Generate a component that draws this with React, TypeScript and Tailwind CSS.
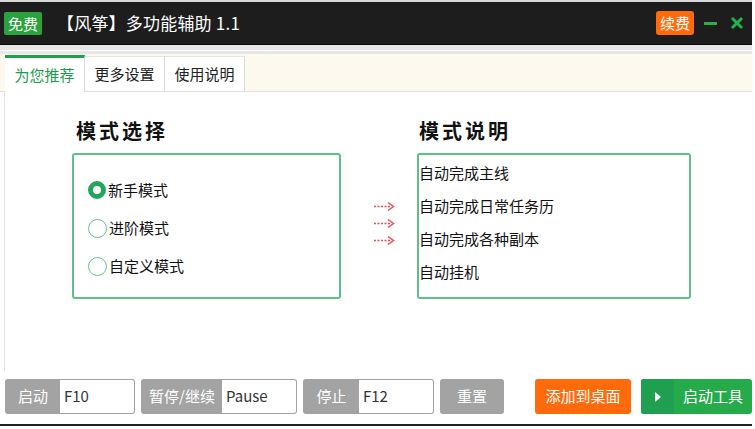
import React, { useState } from "react";

const font = { fontFamily: '"Microsoft YaHei", "Noto Sans CJK SC", "Noto Sans", sans-serif' };

const modes = ["新手模式", "进阶模式", "自定义模式"];
const descs = ["自动完成主线", "自动完成日常任务历", "自动完成各种副本", "自动挂机"];

const Radio: React.FC<{ checked: boolean }> = ({ checked }) =>
  checked ? (
    <span className="w-[18px] h-[18px] rounded-full border-[5px] border-[#24a65a] bg-white box-border" />
  ) : (
    <span className="w-[19px] h-[19px] rounded-full border-[1.5px] border-[#6cc08e] bg-white box-border" />
  );

const Arrow: React.FC = () => (
  <svg width="22" height="11" viewBox="0 0 22 11">
    <line x1="1" y1="5.5" x2="17" y2="5.5" stroke="#ea4b55" strokeWidth="1.4" strokeDasharray="2 1.5" />
    <path d="M15 1.5 L20.5 5.5 L15 9.5" fill="none" stroke="#ea4b55" strokeWidth="1.5" />
  </svg>
);

const HotkeyField: React.FC<{ label: string; value: string; labelW: string; inputW: string }> = ({
  label,
  value,
  labelW,
  inputW,
}) => (
  <div className="flex h-[35px] rounded-[3px] bg-[#a3a3a3] p-[1px]">
    <div className={`${labelW} flex items-center justify-center text-white text-[15px]`}>{label}</div>
    <div className={`${inputW} bg-white flex items-center pl-[4px] text-[15px] text-[#333] rounded-r-[2px]`}>{value}</div>
  </div>
);

export default function App() {
  const [mode, setMode] = useState(0);
  const [tab, setTab] = useState(0);
  const tabs = ["为您推荐", "更多设置", "使用说明"];

  return (
    <div className="w-[755px] h-[429px] bg-white overflow-hidden" style={font}>
      <div className="w-[752px] h-[429px] flex flex-col">
        {/* Title bar */}
        <div className="h-[45px] border-t-2 border-[#d8d8d8] bg-[#1d1d1d] flex items-center pl-[4px] pr-[8px] border-b border-b-[#0a0a0a]">
          <span className="bg-[#2ba23d] text-white text-[15px] leading-[23px] px-[4px] rounded-[2px]">免费</span>
          <span className="ml-[15px] text-white text-[17px] tracking-[0.2px]">【风筝】多功能辅助 1.1</span>
          <div className="ml-auto flex items-center">
            <span className="bg-[#ff6a0a] text-white text-[15px] leading-[24px] px-[4px] rounded-[3px]">续费</span>
            <span className="ml-[10px] w-[13px] h-[3px] bg-[#26b04a]" />
            <svg className="ml-[13px]" width="14" height="14" viewBox="0 0 14 14">
              <path d="M2 2 L12 12 M12 2 L2 12" stroke="#26b04a" strokeWidth="3" />
            </svg>
          </div>
        </div>

        {/* gray band */}
        <div className="h-[5px] bg-[#e6e6e6]" />
        <div className="h-[1px] bg-white" />
        <div className="h-[3px] bg-[#e8e8e8]" />

        {/* Tabs */}
        <div className="h-[38px] bg-[#fdf9ee] border-b border-[#e0e0e0] flex items-end pl-[5px] relative">
          {tabs.map((t, i) =>
            i === tab ? (
              <button
                key={t}
                onClick={() => setTab(i)}
                className="w-[80px] h-[37px] bg-white border-t-[3px] border-[#1fa04b] border-r border-r-[#dcdcdc] text-[15px] text-[#1f9a4a] -mb-[1px]"
              >
                {t}
              </button>
            ) : (
              <button
                key={t}
                onClick={() => setTab(i)}
                className="w-[80px] h-[35px] bg-white border-r border-[#dcdcdc] border-t border-t-[#e4e4e4] text-[15px] text-[#222]"
              >
                {t}
              </button>
            )
          )}
        </div>

        {/* Content */}
        <div className="flex-1 border-l border-[#e6e6e6] ml-[4px] flex pt-[26px]">
          <div className="ml-[67px] w-[269px]">
            <h2 className="text-[20px] font-bold text-[#111] tracking-[3px] leading-[26px] ml-[4px]">模式选择</h2>
            <div className="mt-[9px] h-[146px] border-2 border-[#5ec088] rounded-[3px] pt-[25px] pl-[14px] flex flex-col gap-[18px]">
              {modes.map((m, i) => (
                <label key={m} className="flex items-center cursor-pointer h-[20px]" onClick={() => setMode(i)}>
                  <Radio checked={mode === i} />
                  <span className="ml-[2px] text-[15px] text-[#111]">{m}</span>
                </label>
              ))}
            </div>
          </div>

          <div className="ml-[32px] mt-[83px] flex flex-col gap-[6px]">
            <Arrow />
            <Arrow />
            <Arrow />
          </div>

          <div className="ml-[22px] w-[274px]">
            <h2 className="text-[20px] font-bold text-[#111] tracking-[3px] leading-[26px] ml-[2px]">模式说明</h2>
            <div className="mt-[9px] h-[146px] border-2 border-[#5ec088] rounded-[3px] pt-[8px] flex flex-col gap-[13px]">
              {descs.map((d) => (
                <div key={d} className="text-[15px] text-[#111] leading-[20px]">
                  {d}
                </div>
              ))}
            </div>
          </div>
        </div>

        {/* Bottom bar */}
        <div className="h-[55px] flex items-start pt-[8px] pl-[5px] gap-[6px] border-b-2 border-[#222] mb-[3px]">
          <HotkeyField label="启动" value="F10" labelW="w-[54px]" inputW="w-[74px]" />
          <HotkeyField label="暂停/继续" value="Pause" labelW="w-[80px]" inputW="w-[74px]" />
          <HotkeyField label="停止" value="F12" labelW="w-[55px]" inputW="w-[74px]" />
          <button className="w-[64px] h-[35px] rounded-[3px] bg-[#a3a3a3] text-white text-[15px]">重置</button>
          <button className="ml-[25px] w-[96px] h-[35px] rounded-[3px] bg-[#ff6a0a] text-white text-[15px]">添加到桌面</button>
          <button className="ml-[4px] w-[111px] h-[35px] rounded-[3px] bg-[#25ab4a] flex overflow-hidden">
            <span className="w-[33px] h-full bg-[#1f9f50] flex items-center justify-center">
              <svg width="8" height="12" viewBox="0 0 8 12">
                <path d="M1 1 L7 6 L1 11 Z" fill="white" />
              </svg>
            </span>
            <span className="flex-1 flex items-center justify-center text-white text-[15px]">启动工具</span>
          </button>
        </div>
      </div>
    </div>
  );
}
